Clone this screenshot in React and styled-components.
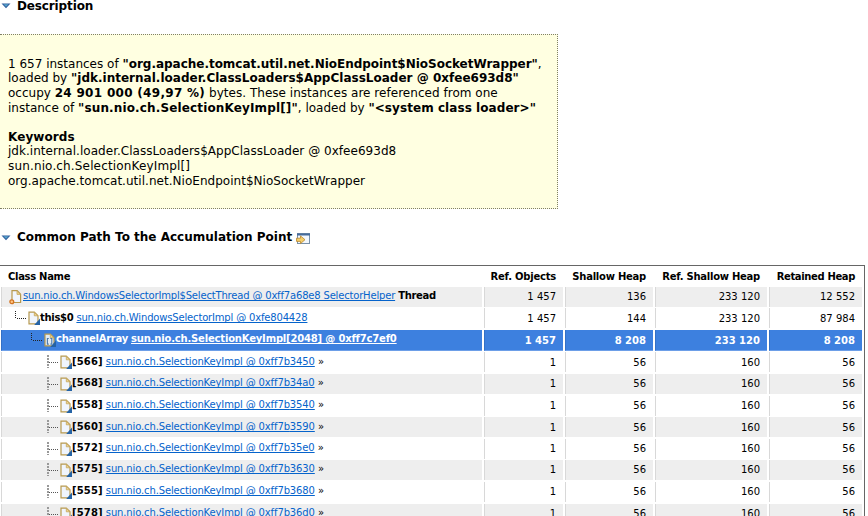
import React from "react";
import styled, { createGlobalStyle, css } from "styled-components";

const Global = createGlobalStyle`
  html, body { margin: 0; background: #fff; overflow: hidden; }
  body { font-family: "DejaVu Sans", Verdana, sans-serif; font-size: 12px; color: #000; }
`;

const Page = styled.main`
  width: 868px;
  height: 516px;
  overflow: hidden;
  display: flex;
  flex-direction: column;
`;

const Heading = styled.h2`
  margin: ${(p) => p.$margin};
  height: ${(p) => p.$height}px;
  line-height: ${(p) => p.$height}px;
  font-size: 12px;
  font-weight: bold;
  display: flex;
  white-space: nowrap;
  flex: none;

  & > svg:first-child { flex: none; margin: ${(p) => p.$height - 10}px 6px 0 1px; }
`;

const Box = styled.section`
  box-sizing: border-box;
  flex: none;
  width: 558px;
  height: 175px;
  padding: 21.8px 0 0 8px;
  border: 1px dotted #808066;
  border-left: 0;
  background: #ffffe1;
`;

const Line = styled.div`
  height: 14.6px;
  line-height: 14.6px;
  white-space: pre;
`;

const Text = styled.span`
  letter-spacing: ${(p) => p.$ls || 0}px;
  font-weight: ${(p) => (p.$bold ? "bold" : "normal")};
`;

const Table = styled.section`
  box-sizing: border-box;
  flex: none;
  width: 865px;
  height: 251px;
  margin-top: 20px;
  border-top: 1px solid #666;
  border-right: 1px solid #666;
  overflow: hidden;
  font-size: 10px;
  display: flex;
  flex-direction: column;
`;

const grid = css`
  display: grid;
  grid-template-columns: 481px 79px 88px 112px 93px;
  column-gap: 2px;
  padding-left: 1px;
  flex: none;
`;

const HeadRow = styled.div`
  ${grid}
  height: 21px;
  font-weight: bold;
  line-height: 21px;
  white-space: nowrap;
`;

const HeadCell = styled.div`
  letter-spacing: ${(p) => p.$ls}px;
  text-align: ${(p) => (p.$first ? "left" : "right")};
  padding: ${(p) => (p.$first ? "0 0 0 7px" : "0 7px 0 0")};
`;

const Row = styled.div`
  ${grid}
  height: ${(p) => p.$pitch}px;
  color: ${(p) => (p.$selected ? "#fff" : "#000")};

  & > div {
    height: ${(p) => (p.$selected ? 21 : 20)}px;
    background: ${(p) => (p.$selected ? "#3d80df" : p.$striped ? "#eee" : "#fff")};
    border-left: 1px solid ${(p) => (p.$selected ? "#3370c6" : "#d8d8d8")};
    border-bottom: ${(p) => (p.$selected ? "1px solid #6d9fe8" : "0")};
  }
`;

const NameCell = styled.div`
  box-sizing: border-box;
  display: flex;
  white-space: pre;
  line-height: 12px;
  padding-left: ${(p) => p.$indent}px;

  & > svg { flex: none; }
  & > span, & > a { margin-top: ${(p) => p.$drop - 1}px; height: 14px; }
`;

const NumberCell = styled.div`
  box-sizing: border-box;
  text-align: right;
  line-height: 12px;
  padding: ${(p) => p.$drop}px 7px 0 0;
  font-weight: ${(p) => (p.$bold ? "bold" : "normal")};
`;

const Link = styled.a`
  color: ${(p) => (p.$bold ? "#fff" : "#0563cb")};
  font-weight: ${(p) => (p.$bold ? "bold" : "normal")};
  letter-spacing: ${(p) => p.$ls}px;
  text-decoration: underline;
  text-decoration-thickness: 1px;
  text-underline-offset: 1px;
  text-decoration-skip-ink: none;
`;

const Label = styled(Text)`
  margin-right: ${(p) => p.$gap || 0}px;
`;

const TreeSvg = styled.svg`
  margin-right: 2px;
`;

const DocSvg = styled.svg`
  margin: 3px ${(p) => (p.$wide ? 0 : -1)}px 0 0;
`;

const DetailsSvg = styled.svg`
  margin: 3px 0 0 4px;
  flex: none;
`;

const Arrow = () => (
  <svg width="10" height="6" viewBox="0 0 10 6">
    <path d="M.5 .5h9L5 5.3z" fill="#2e5c9c" />
    <path d="M2.5 1.2h5L5 3.8z" fill="#55a3cc" />
  </svg>
);

const DetailsIcon = () => (
  <DetailsSvg width="15" height="12" viewBox="0 0 15 12">
    <rect x="1.5" y=".5" width="12" height="10" fill="#f2f7fd" stroke="#7990a8" />
    <path d="M1 1.5h13" stroke="#456b9b" strokeWidth="2" />
    <path d="M.5 5.2h4V2.9L9 6.7 4.5 10.6V8.4h-4z" fill="#f5cf69" stroke="#b9852d" strokeWidth=".8" />
  </DetailsSvg>
);

const Tree = ({ last }) => (
  <TreeSvg width="11" height="20" viewBox="0 0 11 20" shapeRendering="crispEdges">
    {last ? (
      <path d="M.5 3v8" stroke="#222" strokeDasharray="1 1" />
    ) : (
      <path d="M1 3v13" stroke="#999" strokeWidth="2" strokeDasharray="2 1" />
    )}
    <path d="M2 10.5h9" stroke={last ? "#222" : "#555"} strokeDasharray="1 1" />
  </TreeSvg>
);

const Doc = ({ kind }) =>
  kind === "thread" ? (
    <DocSvg $wide width="13" height="15" viewBox="0 0 13 15">
      <path d="M3 .6h5.2l3.4 3.6v8.3H3z" fill="#f0f5fd" stroke="#b7994f" strokeWidth="1.2" />
      <path d="M8 .8v3.6h3.4z" fill="#edd490" stroke="#c4a45a" strokeWidth=".8" />
      <circle cx="2.8" cy="11.8" r="1.9" fill="#ffc582" stroke="#d27322" strokeWidth="1.3" />
    </DocSvg>
  ) : (
    <DocSvg width="13" height="15" viewBox="0 0 13 15">
      <path d="M1 1.1h5.3l3.7 3.7v8H1z" fill={kind ? "#dfebf8" : "#f0f5fd"} stroke="#b7994f" strokeWidth="1.2" />
      <path d="M6.3 1.3v3.5h3.6z" fill="#edd490" stroke="#c4a45a" strokeWidth=".8" />
      <path d="M12 7.5V14H6.2z" fill="#2563a5" />
      {kind === "array" && (
        <path d="M4.8 5.5H3.4v5.6h1.4M6.4 5.5h1.4v5.6H6.4" fill="none" stroke="#4b78a8" strokeWidth="1.1" />
      )}
    </DocSvg>
  );

const children = [
  ["566", "3450", 22, 5],
  ["568", "34a0", 22, 4],
  ["558", "3540", 21, 4],
  ["560", "3590", 22, 5],
  ["572", "35e0", 21, 4],
  ["575", "3630", 22, 4],
  ["555", "3680", 22, 4],
  ["578", "36d0", 22, 4],
];

const Numbers = ({ values, drop, bold }) =>
  values.map((v, i) => (
    <NumberCell key={i} $drop={drop} $bold={bold}>
      {v}
    </NumberCell>
  ));

export default function App() {
  return (
    <Page>
      <Global />
      <Heading $height={13} $margin="0 0 21px">
        <Arrow />
        <Text $bold $ls={-0.13}>Description</Text>
      </Heading>

      <Box>
        <Line>1 657 instances of <Text $bold $ls={-0.02}>"org.apache.tomcat.util.net.NioEndpoint$NioSocketWrapper"</Text>,</Line>
        <Line>loaded by <Text $bold $ls={0.01}>"jdk.internal.loader.ClassLoaders$AppClassLoader @ 0xfee693d8"</Text></Line>
        <Line>occupy <Text $bold $ls={0.3}>24 901 000 (49,97 %)</Text> <Text $ls={0.03}>bytes. These instances are referenced from one</Text></Line>
        <Line>instance of <Text $bold $ls={0.14}>"sun.nio.ch.SelectionKeyImpl[]"</Text>, loaded by <Text $bold $ls={0.06}>"&lt;system class loader&gt;"</Text></Line>
        <Line />
        <Line><Text $bold $ls={0.08}>Keywords</Text></Line>
        <Line><Text $ls={0.03}>jdk.internal.loader.ClassLoaders$AppClassLoader @ 0xfee693d8</Text></Line>
        <Line><Text $ls={0.15}>sun.nio.ch.SelectionKeyImpl[]</Text></Line>
        <Line><Text $ls={0.03}>org.apache.tomcat.util.net.NioEndpoint$NioSocketWrapper</Text></Line>
      </Box>

      <Heading $height={15} $margin="21px 0 0">
        <Arrow />
        <Text $bold>Common Path To the Accumulation Point</Text>
        <DetailsIcon />
      </Heading>

      <Table>
        <HeadRow>
          <HeadCell $first $ls={-0.3}>Class Name</HeadCell>
          <HeadCell $ls={-0.22}>Ref. Objects</HeadCell>
          <HeadCell $ls={-0.24}>Shallow Heap</HeadCell>
          <HeadCell $ls={-0.26}>Ref. Shallow Heap</HeadCell>
          <HeadCell $ls={-0.36}>Retained Heap</HeadCell>
        </HeadRow>

        <Row $striped $pitch={21}>
          <NameCell $indent={7} $drop={4}>
            <Doc kind="thread" />
            <Label $gap={1} />
            <Link $ls={-0.178}>sun.nio.ch.WindowsSelectorImpl$SelectThread @ 0xff7a68e8 SelectorHelper</Link>
            <Text $bold $ls={-0.35}> Thread</Text>
          </NameCell>
          <Numbers drop={4} values={["1 457", "136", "233 120", "12 552"]} />
        </Row>

        <Row $pitch={22}>
          <NameCell $indent={13} $drop={5}>
            <Tree last />
            <Doc />
            <Label $bold $ls={-0.3} $gap={3}>this$0</Label>
            <Link $ls={-0.17}>sun.nio.ch.WindowsSelectorImpl @ 0xfe804428</Link>
          </NameCell>
          <Numbers drop={5} values={["1 457", "144", "233 120", "87 984"]} />
        </Row>

        <Row $selected $pitch={22}>
          <NameCell $indent={29} $drop={4}>
            <Tree last />
            <Doc kind="array" />
            <Label $bold $ls={-0.23} $gap={3}>channelArray</Label>
            <Link $bold $ls={-0.182}>sun.nio.ch.SelectionKeyImpl[2048] @ 0xff7c7ef0</Link>
          </NameCell>
          <Numbers drop={5} bold values={["1 457", "8 208", "233 120", "8 208"]} />
        </Row>

        {children.map(([index, address, pitch, drop], i) => (
          <Row key={index} $pitch={pitch} $striped={i % 2 === 1}>
            <NameCell $indent={45} $drop={drop}>
              <Tree />
              <Doc />
              <Label $bold $ls={0.15} $gap={3}>[{index}]</Label>
              <Link $ls={-0.13}>sun.nio.ch.SelectionKeyImpl @ 0xff7b{address}</Link>
              <span> »</span>
            </NameCell>
            <Numbers drop={drop} values={["1", "56", "160", "56"]} />
          </Row>
        ))}
      </Table>
    </Page>
  );
}
